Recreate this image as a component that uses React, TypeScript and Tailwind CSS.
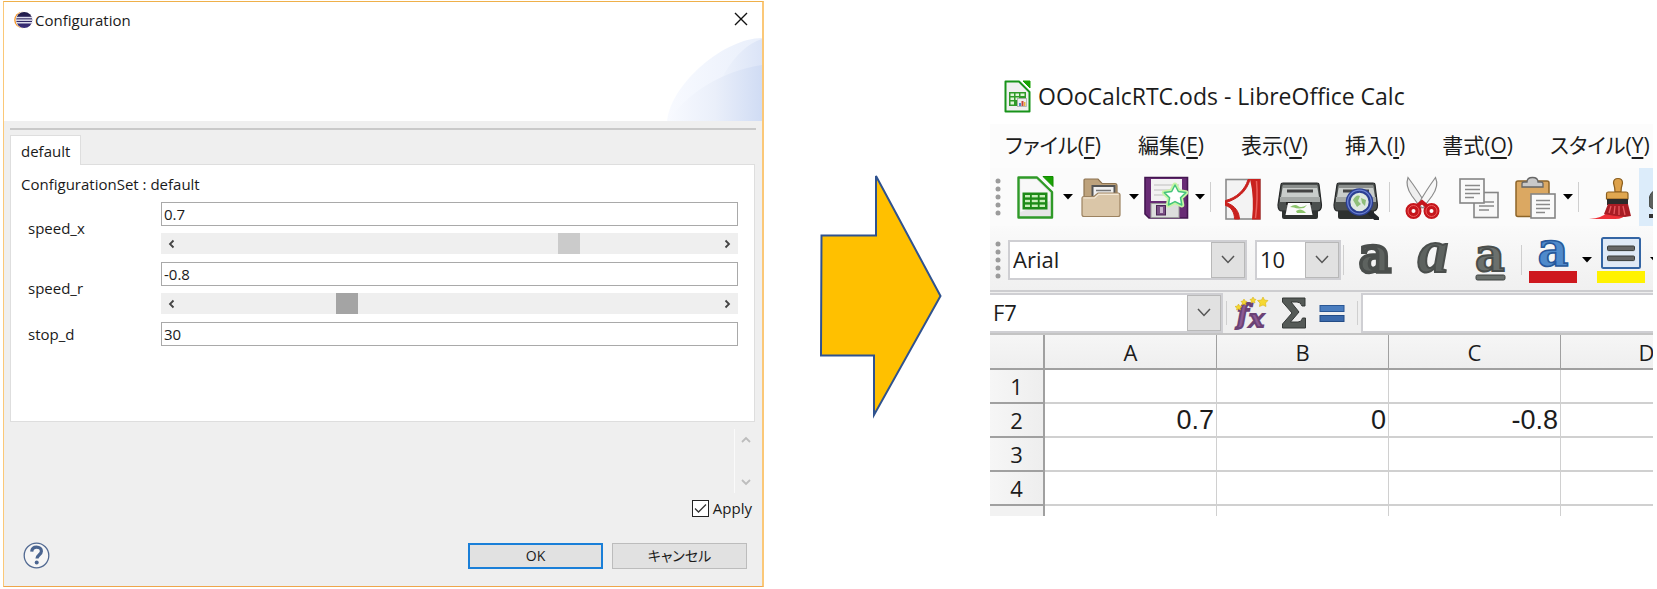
import type { ReactNode } from "react";

const ui = "font-['Open_Sans','Noto_Sans_CJK_JP',sans-serif]";

/* ---------- Configuration dialog ---------- */

function EclipseLogo() {
  return (
    <svg width="19" height="18" viewBox="0 0 19 18" aria-hidden="true">
      <defs>
        <linearGradient id="ecl" x1="0" y1="0" x2="0" y2="1">
          <stop offset="0" stopColor="#1f1a44" />
          <stop offset="1" stopColor="#3c2f7c" />
        </linearGradient>
      </defs>
      <circle cx="8.5" cy="9" r="8.3" fill="#f7941e" />
      <circle cx="10" cy="9" r="8.5" fill="#fff" />
      <circle cx="10.2" cy="9" r="8.1" fill="url(#ecl)" />
      <rect x="2" y="5.8" width="16.4" height="1.5" fill="#dcdcec" />
      <rect x="2" y="8.4" width="16.4" height="1.5" fill="#e6e6f2" />
      <rect x="2" y="11" width="16.4" height="1.5" fill="#dcdcec" />
    </svg>
  );
}

function Swoosh() {
  return (
    <svg width="95" height="83" viewBox="0 0 95 83" aria-hidden="true">
      <defs>
        <linearGradient id="sw1" x1="0" x2="1">
          <stop offset="0" stopColor="#f8faff" />
          <stop offset="1" stopColor="#e9effb" />
        </linearGradient>
        <linearGradient id="sw2" x1="0" x2="1">
          <stop offset="0" stopColor="#f4f7fd" />
          <stop offset="1" stopColor="#dbe4f7" />
        </linearGradient>
        <linearGradient id="sw3" x1="0" x2="1">
          <stop offset="0" stopColor="#f8faff" />
          <stop offset="0.5" stopColor="#eaeffa" />
          <stop offset="1" stopColor="#d0dcf4" />
        </linearGradient>
      </defs>
      <path d="M0 83C4 45 58 0 95 0V83Z" fill="url(#sw1)" />
      <path d="M40 83C46 50 66 10 95 1V83Z" fill="url(#sw2)" />
      <path d="M1 83C20 55 55 33 95 27V83Z" fill="url(#sw3)" />
    </svg>
  );
}

function Chevron({ d, color }: { d: string; color: string }) {
  return (
    <svg width="10" height="10" viewBox="0 0 10 10" fill="none" stroke={color} strokeWidth="1.8" aria-hidden="true">
      <path d={d} />
    </svg>
  );
}

function Field({ id, label, value, slider, thumb }: { id: string; label: string; value: string; slider?: number; thumb?: string }) {
  return (
    <div className="flex items-center">
      <label htmlFor={id} className="w-[133px] shrink-0 leading-5">
        {label}
      </label>
      <div className="flex min-w-0 flex-1 flex-col gap-[7px]">
        <input id={id} defaultValue={value} className="h-6 w-full border border-[#a9a9a9] bg-white px-[2px] outline-none" />
        {slider !== undefined && (
          <div className="flex h-[21px] items-center bg-[#efefef]">
            <button aria-label={`Decrease ${label}`} className="flex h-full w-[22px] items-center justify-center">
              <Chevron d="M6.5 1.5L3 5L6.5 8.5" color="#444" />
            </button>
            <input
              type="range"
              aria-label={`${label} slider`}
              min={0}
              max={1000}
              defaultValue={slider}
              className={`h-[21px] min-w-0 flex-1 appearance-none bg-transparent outline-none [&::-webkit-slider-thumb]:h-[21px] [&::-webkit-slider-thumb]:w-[22px] [&::-webkit-slider-thumb]:appearance-none ${thumb}`}
            />
            <button aria-label={`Increase ${label}`} className="flex h-full w-[22px] items-center justify-center">
              <Chevron d="M3.5 1.5L7 5L3.5 8.5" color="#444" />
            </button>
          </div>
        )}
      </div>
    </div>
  );
}

function ConfigurationDialog() {
  return (
    <section className="flex flex-col border border-r-2 border-[#fbc878] border-t-[#efb04a] border-b-[#efa54a] bg-[#efefef] text-[15px] text-[#1a1a1a]">
      <header className="flex justify-between bg-white">
        <div className="flex h-9 items-center gap-[2px] pl-[10px]">
          <EclipseLogo />
          <h1>Configuration</h1>
        </div>
        <div className="flex flex-col items-end gap-1">
          <button aria-label="Close" className="flex h-8 w-[42px] items-center justify-center pt-[2px]">
            <svg width="14" height="14" viewBox="0 0 14 14" stroke="#111" strokeWidth="1.4" aria-hidden="true">
              <path d="M1 1L13 13M13 1L1 13" />
            </svg>
          </button>
          <Swoosh />
        </div>
      </header>

      <div className="mx-[6px] mt-[7px] h-[2px] bg-[#c9c9c9]" />

      <div className="mr-[7px] ml-[6px] pt-[5px]">
        <div role="tablist" className="flex">
          <button role="tab" aria-selected="true" className="relative z-10 -mb-px h-[30px] border border-b-0 border-[#dedede] bg-white px-[10px] leading-[28px]">
            default
          </button>
        </div>
        <div className="border border-[#dedede] bg-white pt-[9px] pr-4 pb-[75px] pl-[10px]">
          <p className="leading-5">ConfigurationSet : default</p>
          <div className="flex flex-col gap-2 pt-2 pl-[7px]">
            <Field id="speed_x" label="speed_x" value="0.7" slider={734} thumb="[&::-webkit-slider-thumb]:bg-[#cbcbcb]" />
            <Field id="speed_r" label="speed_r" value="-0.8" slider={300} thumb="[&::-webkit-slider-thumb]:bg-[#a4a4a4]" />
            <Field id="stop_d" label="stop_d" value="30" />
          </div>
        </div>
      </div>

      <div className="mt-[7px] mr-[6px] flex justify-end">
        <div className="flex h-16 w-[22px] flex-col items-center justify-between border-l border-[#fafafa] py-[6px]">
          <button aria-label="Scroll up">
            <Chevron d="M1 7L5 3L9 7" color="#bdbdbd" />
          </button>
          <button aria-label="Scroll down">
            <Chevron d="M1 3L5 7L9 3" color="#bdbdbd" />
          </button>
        </div>
      </div>

      <div className="mt-[3px] mr-[10px] flex justify-end">
        <label className="flex h-6 items-center gap-1">
          <span className="relative flex size-[17px]">
            <input type="checkbox" defaultChecked className="peer size-[17px] appearance-none border border-[#222] bg-white" />
            <svg width="17" height="17" viewBox="0 0 17 17" fill="none" stroke="#333" strokeWidth="1.3" className="pointer-events-none absolute inset-0 hidden peer-checked:block" aria-hidden="true">
              <path d="M3 8.5L6.5 12L14 4.5" />
            </svg>
          </span>
          Apply
        </label>
      </div>

      <footer className="mt-[22px] mb-[17px] flex items-center justify-between pr-[15px] pl-[19px]">
        <button aria-label="Help">
          <svg width="27" height="27" viewBox="0 0 27 27" aria-hidden="true">
            <circle cx="13.5" cy="13.5" r="12.3" fill="#f6f6f6" stroke="#526a92" strokeWidth="1.3" />
            <path d="M8.7 9.6C9 6.5 11 5.2 13.6 5.2C16.5 5.2 18.4 6.9 18.4 9.2C18.4 12.6 14 12.8 14 16.6" fill="none" stroke="#4b6590" strokeWidth="3.2" />
            <circle cx="13.7" cy="20.6" r="2" fill="#4b6590" />
          </svg>
        </button>
        <div className="flex gap-[9px] text-sm">
          <button className="h-[26px] w-[135px] border-2 border-[#1a7fd8] bg-[#e1e1e1]">OK</button>
          <button className="h-[26px] w-[135px] border border-[#bcbcbc] bg-[#e1e1e1] [font-feature-settings:'palt']">キャンセル</button>
        </div>
      </footer>
    </section>
  );
}

/* ---------- Spreadsheet icons ---------- */

function Icon({ children }: { children: ReactNode }) {
  return (
    <svg width="46" height="46" viewBox="0 0 46 46" className="block shrink-0" aria-hidden="true">
      {children}
    </svg>
  );
}

function DocIcon() {
  return (
    <Icon>
      <path d="M6.5 3.5H25L40 18V43.5H6.5Z" fill="#e6e6e6" stroke="#2f9a28" strokeWidth="2.4" strokeLinejoin="round" />
      <path d="M8.5 5.5H24.3L38 19V27L8.5 38Z" fill="#fff" opacity=".7" />
      <path d="M31 2.5H41V12.5Z" fill="#18a303" stroke="#128a00" />
      <rect x="10.5" y="18.5" width="25" height="17" fill="#1d8a17" />
      <g fill="#c9efbb">
        <rect x="13" y="21" width="5" height="2.4" /><rect x="19.8" y="21" width="6" height="2.4" /><rect x="27.6" y="21" width="5.4" height="2.4" />
        <rect x="13" y="25.8" width="5" height="2.4" /><rect x="19.8" y="25.8" width="6" height="2.4" /><rect x="27.6" y="25.8" width="5.4" height="2.4" />
        <rect x="13" y="30.6" width="5" height="2.4" /><rect x="19.8" y="30.6" width="6" height="2.4" /><rect x="27.6" y="30.6" width="5.4" height="2.4" />
      </g>
    </Icon>
  );
}

function FolderIcon() {
  return (
    <Icon>
      <path d="M6 30V6Q6 5 7 5H20L24 9.500H37Q39 9.500 39 12V30Z" fill="#bda27c" stroke="#8d7350" strokeWidth="1.2" />
      <rect x="14.500" y="12" width="22" height="12" fill="#f0f0f0" stroke="#555" strokeWidth="2" />
      <path d="M18 16.500H33" stroke="#777" strokeWidth="1.500" />
      <path d="M4 24Q4 22.500 6 22.500H16L20 19H40Q42 19 42 21V40.500Q42 42.500 40 42.500H6Q4 42.500 4 40.500Z" fill="#dac6a8" stroke="#9c8260" strokeWidth="1.200" />
      <path d="M5.500 24H16.600L20.600 20.400H40.500" fill="none" stroke="#f3e8d6" strokeWidth="1.200" />
    </Icon>
  );
}

function SaveIcon() {
  return (
    <Icon>
      <path d="M1 3.500H43.500V44H5L1 40Z" fill="#682b75" stroke="#431650" strokeWidth="1.600" />
      <rect x="7" y="5" width="31" height="22" fill="#f2f2f2" />
      <path d="M10 11H35M10 16H35M10 21H24" stroke="#cfcfcf" strokeWidth="1.500" />
      <rect x="7" y="29.500" width="28" height="14" fill="#ddd" stroke="#999" />
      <rect x="12.500" y="31.500" width="9" height="9.500" fill="#7a4f85" stroke="#4a2555" />
      <rect x="16" y="33" width="3" height="6" fill="#cbb8d0" />
      <path d="M31 11L34.400 17.500L41.800 18.600L36.500 23.700L37.800 31L31 27.600L24.400 31L25.600 23.700L20.300 18.600L27.700 17.500Z" fill="#fff" stroke="#c6f5a4" strokeWidth="5" strokeLinejoin="round" />
      <path d="M31 11L34.400 17.500L41.800 18.600L36.500 23.700L37.800 31L31 27.600L24.400 31L25.600 23.700L20.300 18.600L27.700 17.500Z" fill="#fff" stroke="#45c47d" strokeWidth="1.500" strokeLinejoin="round" />
    </Icon>
  );
}

function PdfIcon() {
  return (
    <Icon>
      <rect x="5" y="5.500" width="34" height="39.500" fill="#f3f3f3" stroke="#8b8b8b" strokeWidth="1.600" />
      <path d="M29 5H39.500V45.500H31Q33.500 24 29 5Z" fill="#c9211e" />
      <path d="M35.500 7Q37 24 34.500 44" fill="none" stroke="#e9605c" strokeWidth="1.500" />
      <path d="M29 5.500C26 17 17 25 5 28.500C15 32 18 38 18.500 45H13.500C13.500 38 10 33 4.500 31.500V26.500C15 24 24 16 27 5.500Z" fill="#c9211e" stroke="#c9211e" />
    </Icon>
  );
}

function PrinterBody() {
  return (
    <>
      <path d="M4 10.500Q4 9 6 9H40Q42 9 42 10.500L44.500 31Q44.500 37 40 37H5Q1 37 1 31Z" fill="#4b4f4e" stroke="#262828" strokeWidth="1.200" />
      <path d="M6 11H40L42 23H4Z" fill="#c9cdcb" />
      <path d="M6 11H40L40.500 14H5.500Z" fill="#8b8f8d" />
      <path d="M10 15.500H36V18.500H10Z" fill="#444" />
      <path d="M3 23H43V28H3Z" fill="#a4a8a6" />
      <path d="M5 37H41V43Q41 45 39 45H7Q5 45 5 43Z" fill="#2e3130" />
    </>
  );
}

function PrinterIcon() {
  return (
    <Icon>
      <PrinterBody />
      <path d="M9 28H35V31H9Z" fill="#222" />
      <path d="M11 29H33L35.500 41H8.500Z" fill="#fafafa" />
      <path d="M13 33Q18 29.500 21 32T30 31L27 34Q20 35 17 33.500ZM19 37Q23 34 27 37L29 39H20Z" fill="#8cc46b" />
    </Icon>
  );
}

function PreviewIcon() {
  return (
    <Icon>
      <PrinterBody />
      <path d="M36 38L44 45" stroke="#23272b" strokeWidth="5" strokeLinecap="round" />
      <circle cx="26.500" cy="28" r="11.500" fill="#dfe9e0" stroke="#2c3f92" strokeWidth="4.600" />
      <circle cx="26.500" cy="28" r="11.800" fill="none" stroke="#6c82d2" strokeWidth="1.300" />
      <path d="M20 26Q23 20 27 22L25 27L28 30L24 33ZM28 24L33 26L32 32L29 29Z" fill="#8fbf7a" />
    </Icon>
  );
}

function ScissorsIcon() {
  return (
    <Icon>
      <path d="M8 3.500C6 9 7 15 12 22L21 34L26 31Q19 18 8 3.500Z" fill="#eee" stroke="#8b8b8b" strokeWidth="1.200" />
      <path d="M35.500 3.500C38 9 37 15 32 22L23 34L18 31Q25 18 35.500 3.500Z" fill="#f7f7f7" stroke="#8b8b8b" strokeWidth="1.200" />
      <path d="M16 33L22 28L28 33" fill="none" stroke="#c5161c" strokeWidth="4" />
      <g fill="none" stroke="#c5161c" strokeWidth="6">
        <circle cx="13.500" cy="37" r="5" />
        <circle cx="31.500" cy="37" r="5" />
      </g>
      <g fill="none" stroke="#ee5c5c" strokeWidth="1">
        <circle cx="13.500" cy="37" r="5.500" />
        <circle cx="31.500" cy="37" r="5.500" />
      </g>
    </Icon>
  );
}

function CopyIcon() {
  return (
    <Icon>
      <rect x="18" y="18.500" width="24" height="25" fill="#f7f7f7" stroke="#858585" strokeWidth="1.600" />
      <path d="M23 28H38M23 32H38M23 36H33" stroke="#8a8a8a" strokeWidth="1.600" />
      <rect x="4" y="5" width="24" height="24" fill="#fafafa" stroke="#858585" strokeWidth="1.600" />
      <path d="M9 11.500H24M9 15.500H24M9 19.500H24M9 23.500H18" stroke="#8a8a8a" strokeWidth="1.600" />
    </Icon>
  );
}

function PasteIcon() {
  return (
    <Icon>
      <rect x="4" y="7" width="33" height="35.500" rx="2" fill="#dba862" stroke="#8d6428" strokeWidth="1.500" />
      <path d="M10 13V9.500Q10 8 12 8H15Q15 3.500 20.500 3.500Q26 3.500 26 8H29Q31 8 31 9.500V13Z" fill="#c9c9c9" stroke="#666" strokeWidth="1.300" />
      <rect x="19" y="20" width="24" height="24" fill="#fafafa" stroke="#858585" strokeWidth="1.600" />
      <path d="M24 26.500H38M24 30.500H38M24 34.500H38M24 38.500H33" stroke="#8a8a8a" strokeWidth="1.600" />
    </Icon>
  );
}

function BrushIcon() {
  return (
    <Icon>
      <path d="M0 45Q14 44 18 38L38 39Q35 45 26 45Z" fill="#ee3038" />
      <path d="M26 18Q26 14 24.500 9Q24.500 4.500 29 4.500Q33.500 4.500 33.500 9Q32 14 32 18Z" fill="#dda14a" stroke="#8b5f1f" strokeWidth="1.200" />
      <path d="M19 18H37Q39 18 39 20V25H17.500V20Q17.500 18 19 18Z" fill="#e0a750" stroke="#8b5f1f" strokeWidth="1.200" />
      <path d="M18 25H39V31H18Z" fill="#2b2b2b" />
      <path d="M19 30H39L42 42L36 43Q24 42 15 40Z" fill="#a81c24" />
      <path d="M22 32L20 39M26 32L25 40M30 32L30 41M34 32L36 41" stroke="#e85a60" strokeWidth="1.300" />
    </Icon>
  );
}

function Caret() {
  return (
    <svg width="10" height="6" viewBox="0 0 10 6" aria-hidden="true">
      <path d="M0 0H10L5 5.500Z" fill="#000" />
    </svg>
  );
}

function Tool({ label, children }: { label: string; children: ReactNode }) {
  return (
    <button aria-label={label} className="shrink-0">
      {children}
    </button>
  );
}

function DropTool({ label, children }: { label: string; children: ReactNode }) {
  return (
    <div className="flex shrink-0">
      <button aria-label={label}>{children}</button>
      <button aria-label={`${label} options`} className="flex w-5 items-center justify-center">
        <Caret />
      </button>
    </div>
  );
}

function Grip() {
  return (
    <svg width="6" height="38" viewBox="0 0 6 38" fill="#9b9b9b" className="shrink-0" aria-hidden="true">
      <circle cx="3" cy="3" r="2.500" />
      <circle cx="3" cy="11" r="2.500" />
      <circle cx="3" cy="19" r="2.500" />
      <circle cx="3" cy="27" r="2.500" />
      <circle cx="3" cy="35" r="2.500" />
    </svg>
  );
}

function Combo({ label, value, size }: { label: string; value: string; size: string }) {
  return (
    <div className={`flex shrink-0 border-2 border-[#cfcfd3] bg-white ${size}`}>
      <input aria-label={label} defaultValue={value} className="min-w-0 flex-1 bg-transparent px-[3px] text-[22px] outline-none" />
      <button aria-label={`${label} list`} className="flex w-[34px] shrink-0 items-center justify-center border border-[#b8b8b8] bg-[#e1e1e1]">
        <svg width="14" height="9" viewBox="0 0 14 9" fill="none" stroke="#555" strokeWidth="1.500" aria-hidden="true">
          <path d="M1 1L7 7.500L13 1" />
        </svg>
      </button>
    </div>
  );
}

function BoldIcon() {
  return (
    <svg width="40" height="46" viewBox="0 0 40 46" className="block overflow-visible" aria-hidden="true">
      <text x="19" y="35" textAnchor="middle" fontFamily="'DejaVu Serif', serif" fontSize="50" fontWeight="bold" fill="#5d625f" stroke="#4a4e4c" strokeWidth="3.500">
        a
      </text>
    </svg>
  );
}

function ItalicIcon() {
  return (
    <svg width="40" height="46" viewBox="0 0 40 46" className="block overflow-visible" aria-hidden="true">
      <text x="19" y="35" textAnchor="middle" fontFamily="'Liberation Serif', serif" fontSize="62" fontWeight="bold" fontStyle="italic" fill="#5d625f" stroke="#4a4e4c" strokeWidth="2">
        a
      </text>
    </svg>
  );
}

function UnderlineIcon() {
  return (
    <svg width="40" height="46" viewBox="0 0 40 46" className="block overflow-visible" aria-hidden="true">
      <text x="18" y="34" textAnchor="middle" fontFamily="'DejaVu Serif', serif" fontSize="46" fontWeight="bold" fill="#6b706d" stroke="#4a4e4c" strokeWidth="2">
        a
      </text>
      <rect x="4" y="38" width="29" height="5" rx="1.500" fill="#6b706d" stroke="#3f4341" />
    </svg>
  );
}

function FontColorIcon() {
  return (
    <svg width="48" height="48" viewBox="0 0 48 48" className="block overflow-visible" aria-hidden="true">
      <text x="24" y="30" textAnchor="middle" fontFamily="'DejaVu Serif', serif" fontSize="48" fontWeight="bold" fill="#4f8acb" stroke="#27589b" strokeWidth="1.600">
        a
      </text>
      <rect x="0" y="35" width="48" height="12" fill="#ce181e" />
    </svg>
  );
}

function HighlightIcon() {
  return (
    <svg width="48" height="48" viewBox="0 0 48 48" className="block" aria-hidden="true">
      <rect x="5" y="2" width="38" height="30" rx="1.500" fill="#dfe9f6" stroke="#3465a4" strokeWidth="2" />
      <rect x="10.500" y="10" width="27" height="4.600" rx="1" fill="#666" stroke="#3a3d3b" />
      <rect x="10.500" y="20" width="27" height="4.600" rx="1" fill="#666" stroke="#3a3d3b" />
      <rect x="0" y="35" width="48" height="12" fill="#fff200" />
    </svg>
  );
}

/* ---------- Spreadsheet window ---------- */

const menus: [string, string][] = [
  ["ファイル", "F"],
  ["編集", "E"],
  ["表示", "V"],
  ["挿入", "I"],
  ["書式", "O"],
  ["スタイル", "Y"],
];

const rows = [
  ["1", "", "", "", ""],
  ["2", "0.7", "0", "-0.8", ""],
  ["3", "", "", "", ""],
  ["4", "", "", "", ""],
];

function CalcLogo() {
  return (
    <svg width="27" height="33" viewBox="0 0 27 33" aria-hidden="true">
      <path d="M1.500 1.500H15L25.500 12V31.500H1.500Z" fill="#f0f0f0" stroke="#18931a" strokeWidth="2" strokeLinejoin="round" />
      <path d="M19 1H26V8Z" fill="#18a303" stroke="#18a303" />
      <rect x="5" y="12" width="17" height="14" fill="#2f9a28" />
      <path d="M6.500 13.500H10V16H6.500ZM11.500 13.500H15V16H11.500ZM16.500 13.500H20.500V16H16.500ZM6.500 17.500H10V20H6.500ZM11.500 17.500H15V20H11.500ZM6.500 21.500H10V24.500H6.500Z" fill="#dff5d8" />
      <rect x="13.500" y="18.500" width="9" height="8" fill="#eee" stroke="#aaa" strokeWidth=".8" />
      <path d="M15 23H17V26H15Z" fill="#4a88c8" />
      <path d="M17.500 21H19.500V26H17.500Z" fill="#c6463c" />
      <path d="M20 22H21.500V26H20Z" fill="#e8b13c" />
    </svg>
  );
}

function SpreadsheetWindow() {
  return (
    <section className="min-w-0 overflow-hidden text-[#1c1c1c]">
      <header className="flex h-14 items-center gap-[7px] pl-[14px]">
        <CalcLogo />
        <h2 className="text-[23px] whitespace-nowrap">OOoCalcRTC.ods - LibreOffice Calc</h2>
      </header>

      <nav className="flex h-11 items-center gap-[37px] bg-[#fcfcfc] pl-[15px] text-[21px] [font-feature-settings:'palt']">
        {menus.map(([name, key]) => (
          <button key={key} className="shrink-0 whitespace-nowrap">
            {name}(<span className="underline decoration-2 underline-offset-4">{key}</span>)
          </button>
        ))}
      </nav>

      <div className="flex h-[58px] items-center bg-[#fbfbfb] pl-[5px]">
        <Grip />
        <div className="flex shrink-0 pl-[11px]">
          <DropTool label="New"><DocIcon /></DropTool>
          <DropTool label="Open"><FolderIcon /></DropTool>
          <DropTool label="Save"><SaveIcon /></DropTool>
        </div>
        <div className="mr-[10px] h-[30px] w-px shrink-0 bg-[#cfcfcf]" />
        <div className="flex shrink-0 gap-[10px]">
          <Tool label="Export as PDF"><PdfIcon /></Tool>
          <Tool label="Print"><PrinterIcon /></Tool>
          <Tool label="Print preview"><PreviewIcon /></Tool>
        </div>
        <div className="mx-[10px] h-[30px] w-px shrink-0 bg-[#cfcfcf]" />
        <div className="flex shrink-0 gap-[10px]">
          <Tool label="Cut"><ScissorsIcon /></Tool>
          <Tool label="Copy"><CopyIcon /></Tool>
          <DropTool label="Paste"><PasteIcon /></DropTool>
        </div>
        <div className="mr-[10px] h-[30px] w-px shrink-0 bg-[#cfcfcf]" />
        <Tool label="Clone formatting"><BrushIcon /></Tool>
        <button aria-label="Clear formatting" className="ml-1 flex h-[58px] w-[60px] shrink-0 items-center bg-[#dcecfa] pl-[10px]">
          <svg width="40" height="46" viewBox="0 0 40 46" aria-hidden="true">
            <path d="M0 26Q1 16 9 16H30V35H5Q0 34 0 30Z" fill="#5d625f" stroke="#3f4341" />
            <path d="M0 42H4M7 42H11M14 42H18" stroke="#333" strokeWidth="4" />
          </svg>
        </button>
      </div>

      <div className="flex h-[66px] items-center border-b-2 border-[#cdcdd0] bg-linear-to-b from-[#fafafa] to-[#f0f0f0] pt-[3px] pl-[5px]">
        <Grip />
        <div className="flex shrink-0 gap-2 pl-[7px]">
          <Combo label="Font name" value="Arial" size="h-10 w-[239px]" />
          <Combo label="Font size" value="10" size="h-10 w-[86px]" />
        </div>
        <div className="mr-3 ml-[2px] h-[30px] w-px shrink-0 bg-[#cfcfcf]" />
        <div className="flex shrink-0 gap-[18px]">
          <Tool label="Bold"><BoldIcon /></Tool>
          <Tool label="Italic"><ItalicIcon /></Tool>
          <Tool label="Underline"><UnderlineIcon /></Tool>
        </div>
        <div className="mr-[7px] ml-[9px] h-[30px] w-px shrink-0 bg-[#cfcfcf]" />
        <DropTool label="Font color"><FontColorIcon /></DropTool>
        <DropTool label="Background color"><HighlightIcon /></DropTool>
      </div>

      <div className="flex h-[43px] items-center border-b-2 border-[#c4c4c4] bg-[#efefef]">
        <Combo label="Name box" value="F7" size="h-10 w-[233px] border-l-0" />
        <div className="mr-2 ml-[3px] h-6 w-px shrink-0 bg-[#cfcfcf]" />
        <div className="flex shrink-0 items-center gap-3">
          <Tool label="Function wizard">
            <svg width="34" height="34" viewBox="0 0 34 34" className="block overflow-visible" aria-hidden="true">
              <text x="2" y="28" fontFamily="'DejaVu Serif', serif" fontSize="27" fontWeight="bold" fontStyle="italic" fill="#8c5a93" stroke="#6b4275" strokeWidth="2">f</text>
              <text x="14" y="31" fontFamily="'DejaVu Serif', serif" fontSize="25" fontWeight="bold" fontStyle="italic" fill="#8c5a93" stroke="#6b4275" strokeWidth="2">x</text>
              <g fill="#f6d832" stroke="#d9b416" strokeWidth=".6">
                <path d="M28 1L29.500 4L33 4.500L30.500 7L31 10.500L28 9L24.500 10.500L25 7L22.500 4.500L26.500 4Z" />
                <path d="M18 1L19 3L21 3.500L19.500 5L20 7L18 6L16 7L16.500 5L15 3.500L17 3Z" />
                <path d="M9 3L10 5L12 5.500L10.500 7L11 9L9 8L7 9L7.500 7L6 5.500L8 5Z" />
                <path d="M3.500 8L4.500 10L7 10.500L5 12L5.500 14L3.500 13L1.500 14L2 12L0 10.500L2.500 10Z" />
              </g>
            </svg>
          </Tool>
          <Tool label="Sum">
            <svg width="26" height="34" viewBox="0 0 26 34" className="block" aria-hidden="true">
              <path d="M1.500 2H24V10H21Q20 6 16 6H10L18 16L9.500 26H17Q21 26 21.500 22H24.500V32H1.500V28L11 17L1.500 6Z" fill="#555a57" stroke="#353837" />
            </svg>
          </Tool>
          <Tool label="Formula">
            <svg width="26" height="34" viewBox="0 0 26 34" className="block" aria-hidden="true">
              <rect x="1" y="9.500" width="24" height="6" fill="#4a7dbf" stroke="#2a5795" />
              <rect x="1" y="19.500" width="24" height="6" fill="#3a69ab" stroke="#234c86" />
            </svg>
          </Tool>
        </div>
        <div className="mr-[3px] ml-3 h-6 w-px shrink-0 bg-[#cfcfcf]" />
        <input aria-label="Formula input" className="h-10 min-w-0 flex-1 border-2 border-r-0 border-[#cfcfd3] bg-white px-[3px] text-[22px] outline-none" />
      </div>

      <div className="max-h-[181px] overflow-hidden">
        <table className="w-[743px] table-fixed border-separate border-spacing-0 text-[22px]">
          <thead>
            <tr className="h-[35px] bg-linear-to-b from-[#f6f6f6] to-[#eeeeee]">
              <th aria-label="Row" className="w-[55px] border-r-2 border-b-2 border-[#a0a0a0]" />
              {["A", "B", "C", "D"].map((c) => (
                <th key={c} scope="col" className="w-[172px] border-r border-b-2 border-[#a0a0a0] p-0 font-normal leading-8">
                  {c}
                </th>
              ))}
            </tr>
          </thead>
          <tbody>
            {rows.map((row) => (
              <tr key={row[0]} className="h-[34px]">
                <th scope="row" className="border-r-2 border-b-2 border-[#a0a0a0] bg-linear-to-r from-[#f6f6f6] to-[#eeeeee] p-0 font-normal leading-8">
                  {row[0]}
                </th>
                {row.slice(1).map((v, i) => (
                  <td key={i} className="border-r border-b-2 border-[#d0d0d0] p-0 pr-[2px] text-right [font-family:'Liberation_Sans',Arial,sans-serif] text-[27px] leading-8">
                    {v}
                  </td>
                ))}
              </tr>
            ))}
            <tr className="h-[11px]">
              <th aria-label="Next row" className="border-r-2 border-[#a0a0a0] bg-[#f2f2f2] p-0" />
              {[0, 1, 2, 3].map((i) => (
                <td key={i} className="border-r border-[#d0d0d0] p-0" />
              ))}
            </tr>
          </tbody>
        </table>
      </div>
    </section>
  );
}

export default function App() {
  return (
    <main className={`grid grid-cols-[761fr_130px_663fr] items-start gap-x-12 bg-white pt-px pr-1 pl-[3px] ${ui}`}>
      <ConfigurationDialog />
      <div className="flex justify-end pt-[172px]">
        <svg width="124" height="246" viewBox="0 0 124 246" aria-hidden="true">
          <path d="M58 3L122.500 123L56 242V182.500H3L3.500 62.500H58Z" fill="#ffc000" stroke="#2f528f" strokeWidth="2" />
        </svg>
      </div>
      <div className="min-w-0 pt-[67px]">
        <SpreadsheetWindow />
      </div>
    </main>
  );
}
